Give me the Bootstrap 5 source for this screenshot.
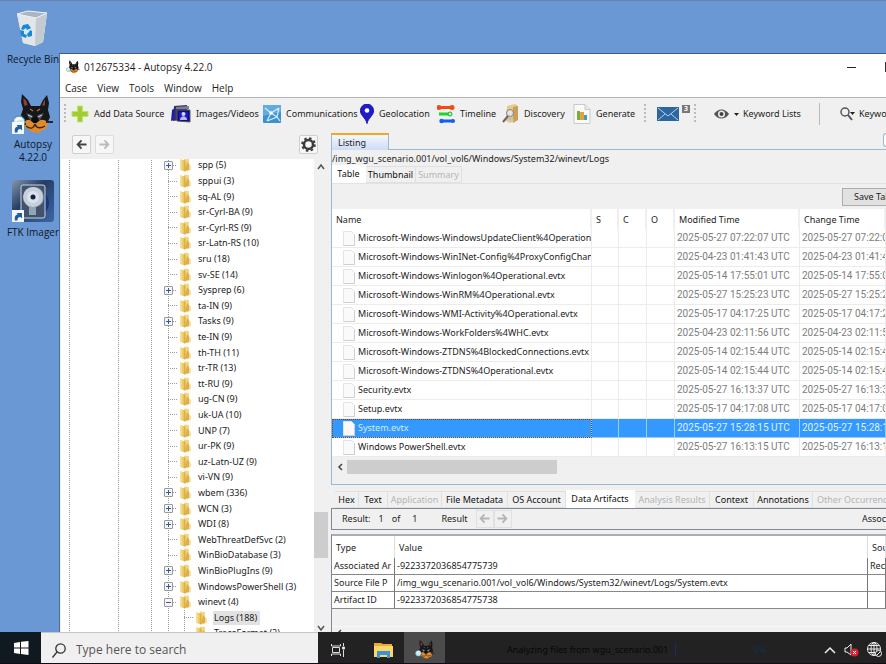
<!DOCTYPE html>
<html lang="en">
<head>
<meta charset="utf-8">
<meta name="viewport" content="width=device-width, initial-scale=1">
<title>012675334 - Autopsy 4.22.0</title>
<link href="https://cdn.jsdelivr.net/npm/bootstrap@5.3.0/dist/css/bootstrap.min.css" rel="stylesheet">
<style>
:root{--ui:"Noto Sans","Open Sans",sans-serif;--shell:"Open Sans","Noto Sans",sans-serif;--face:#f0f0f0;--edge:#9db9d1}
body{font:9px/16px var(--ui);color:#1c1c1c;background:#6998d4;height:100vh;overflow:hidden}
button{font:inherit;color:inherit}
svg{flex:none;display:block}
.clip{overflow:hidden;white-space:nowrap}
.desk{border-top:1px solid #6b82ab;min-height:0}
.shortcuts{width:59px;font:10px/13px var(--shell);color:#0d1726;padding-top:8px}
.shortcuts a{width:66px;color:inherit;text-decoration:none;text-align:center;display:flex;flex-direction:column;align-items:center}
.win{background:var(--face);border-left:1px solid #4f6f9d;border-top:1px solid #3d5c8c;margin-top:52px;min-width:0}
.caption-bar{background:#fff;height:26px;font:10px/24px var(--shell);padding:0 0 0 6px}
.menus{background:#fff;height:18px;border-bottom:1px solid #b4b4b4;font:10px/17px var(--shell);padding-left:5px;gap:10px}
.menus button,.tool,.plain{background:none;border:0;padding:0;white-space:nowrap}
.tools{height:34px;display:grid;align-items:center;grid-template-columns:7px 100px 92px 97px 77px 65px 71px 71px 13px 37px 20px 105px 21px auto;padding:0 0 2px 4px}
.tool{display:flex;align-items:center;gap:5px;text-align:left}
.grip{width:2px;height:20px;background:linear-gradient(#bbb 50%,transparent 50%) 0 0/2px 4px}
.left{width:268px}
.navrow{height:27px;padding:3px 10px 0 12px}
.sq{width:19px;height:19px;padding:0;border:1px solid #cfcfcf;border-radius:2px;background:#f7f7f7;display:flex;align-items:center;justify-content:center;color:#444}
.sq:disabled{border-color:#ddd;color:#bbb}
.treebox{background:#fff;margin-left:1px;min-height:0}
.tree{margin:-1px 0 -9px;padding:0;list-style:none;flex:1;display:flex;flex-direction:column;
--d:linear-gradient(#999 50%,transparent 50%);
background:var(--d) 8px 0/1px 2px repeat-y,var(--d) 57px 0/1px 2px repeat-y,var(--d) 90px 0/1px 2px repeat-y,var(--d) 107px 0/1px 2px repeat-y}
.tree li{flex:1 1 0;min-height:0;display:flex;align-items:center;padding-left:103px;line-height:14px}
.tree li::before{content:"";order:1;width:9px;height:1px;margin-left:4px;background:linear-gradient(90deg,#999 50%,transparent 50%) 0 0/2px 1px}
.tree li.kids::before{width:4px;margin-left:0}
.tree button{order:0;width:9px;height:9px;padding:0;border:1px solid #999;background:#f5f5f5;border-radius:1px;display:flex;align-items:center;justify-content:center}
.tree svg.fold{order:2;margin:0 6px 0 2px}
.tree span{order:3}
.tree li.deep{padding-left:119px;background:linear-gradient(#999 50%,transparent 50%) 123px 0/1px 2px repeat-y}
.tree .on{background:#e2e2e2;padding:0 3px 0 1px;margin-left:-1px}
.vbar{width:14px;background:var(--face)}
.vthumb{background:#cdcdcd;height:46px}
.right{min-width:0;margin-left:3px}
.toptabs{height:18px;padding-top:1px;border-bottom:1px solid var(--edge)}
.toptabs .cur{width:58px;height:17px;line-height:15px;border:1px solid var(--edge);border-top:2px solid #f5a623;border-bottom:0;background:linear-gradient(#f4f7fd,#cddcf6);padding:0 0 0 6px;text-align:left}
.tail{width:3px;height:14px;padding:0;border:1px solid var(--edge);border-right:0;background:#fff;border-radius:3px 0 0 3px}
.listing{border-left:1px solid var(--edge);border-bottom:1px solid var(--edge)}
.path{height:16px;line-height:18px}
.tabs{height:18px;display:flex;align-items:flex-end;border-bottom:1px solid #e2e2e2}
.tabs button{height:17px;line-height:16px;padding:0;border:1px solid #e0e0e0;border-left:0;background:var(--face);text-align:center;flex:none;white-space:nowrap;color:#111;overflow:hidden}
.tabs button:disabled{color:#b4b4b4}
.tabs .cur{height:18px;background:#fff;border-color:#fff}
.actions{height:25px;padding:4px 0}
.save{width:44px;height:18px;line-height:15px;border:1px solid #adadad;border-right:0;background:#e1e1e1;padding:0 0 0 11px;text-align:left}
.grid{table-layout:fixed;width:100%;border-collapse:separate;border-spacing:0;background:#fff}
.grid th,.grid td{overflow:hidden;white-space:nowrap;font-weight:400;vertical-align:middle}
.files th{height:20px;padding:3px 4px 0;border-right:2px solid #efefef;line-height:16px}
.files td{height:19px;line-height:17px;padding:0 2px;border-right:1px solid #ececec;border-bottom:1px solid #ececec;color:#7d7d7d;font-family:Roboto,"Noto Sans",sans-serif;font-size:10px}
.files td:first-child{padding-left:11px;color:#1c1c1c;font-family:var(--ui);font-size:9px}
.files .doc{display:inline-block;vertical-align:middle;margin-right:3px}
.files .sel td{background:#3399ff;color:#e3f0ff;border-color:#9cf}
.files .sel td:first-child{outline:1px dotted #7a4b10;outline-offset:-1px;color:#d5e9ff}
.hbar{height:27px;padding:3px 0 9px 5px}
.hthumb{background:#cdcdcd;width:210px;height:14px}
.lower{padding-top:5px}
.lower .tabs{border:0}
.result{border:1px solid #7f8893;border-right:0;height:22px;padding-left:10px}
.result .plain{width:18px;height:18px;border:1px solid #e0e0e0;display:flex;align-items:center;justify-content:center}
.arts{border-left:1px solid #7f8893;border-top:2px solid #a9adb2;margin-top:4px}
.arts th{height:22px;padding:3px 4px 0;border-right:1px solid #ddd}
.arts td{height:17px;line-height:16px;padding:0 2px;border-right:1px solid #777;border-bottom:1px solid #888}
.bottomgap{border-bottom:1px solid #f8f8f8;height:18px}
.task{height:32px;background:#222;border-bottom:1px solid #120c18}
.start{width:41px;background:#101820;border:0;padding:0;display:flex;align-items:center;justify-content:center}
.find{width:277px;background:#f0f0f0;border-top:1px solid #c6c6c6;padding:4px 11px 0;gap:10px}
.find input{border:0;background:none;outline:0;font:12px/20px var(--shell);padding:0;min-width:0;flex:1}
.find input::placeholder{color:#555;opacity:1}
.app{width:41px;background:none;border:0;padding:4px 0 0;display:flex;align-items:center;justify-content:center}
.app.live{background:#4b4b4b}
.ghost{color:#070707;padding-left:62px}
.ghost b{font-weight:400;color:#142f50;border-left:1px solid #1c2c66;padding-left:78px;margin-left:4px}
.sep{height:22px}
.midrow{min-height:0}
.vrest{height:66px}
.num{font:bold 7px/8px var(--ui);background:#777;color:#fff;width:8px;height:8px;text-align:center;margin-left:3px}
</style>
<script src="https://cdn.jsdelivr.net/npm/bootstrap@5.3.0/dist/js/bootstrap.bundle.min.js"></script>
</head>
<body class="d-flex flex-column">
<svg width="0" height="0" class="position-absolute" aria-hidden="true">
<linearGradient id="gold" x1="0" x2="1"><stop offset="0" stop-color="#f9e79c"/><stop offset="1" stop-color="#e3b64a"/></linearGradient>
<symbol id="fold" viewBox="0 0 13 14"><path d="M5 .5l5 .5v8l-4 3z" fill="#f3d87c"/><path d="M8 4l3.500 4v4L6 13z" fill="#dfae47"/><path d="M10 7l2 1v4h-2z" fill="#f4dfa0"/><path d="M1 1l5 1.500v11L1 12z" fill="url(#gold)"/><path d="M6 2.500v11" stroke="#cfa23e" stroke-width=".8"/></symbol>
<symbol id="doc" viewBox="0 0 12 15"><path d="M.5.5h8l3 3v11H.5z" fill="#fafafa" stroke="#e4e4e4"/><path d="M11.500 3.500v11H.5" fill="none" stroke="#cfcfcf"/></symbol>
<symbol id="plus" viewBox="0 0 7 7"><path d="M1 3.500h5M3.500 1v5" stroke="#3957a0"/></symbol>
<symbol id="minus" viewBox="0 0 7 7"><path d="M1 3.500h5" stroke="#3957a0"/></symbol>
<symbol id="larr" viewBox="0 0 12 12"><path d="M6 1.500L1.800 6 6 10.500M2 6h9.500" fill="none" stroke="currentColor" stroke-width="2"/></symbol>
<symbol id="rarr" viewBox="0 0 12 12"><path d="M6 1.500L10.200 6 6 10.500M10 6H.5" fill="none" stroke="currentColor" stroke-width="2"/></symbol>
<symbol id="dog" viewBox="0 0 42 40"><path d="M11 15L9 8l1-8 6 6 3 6h9l3-6 4-5 2 8-1 7 2 7-4 9-7 4-9-1-6-7-3-7z" fill="#15171b"/><path d="M12.500 12l-1-4v-4l3 3 1 4z" fill="#8e3f33"/><path d="M33 11V5l-2 4-1 3z" fill="#8e3f33"/><path d="M14 19l6 2 2 4-4 1zM32 19l-6 2-2 4 4 1z" fill="#4b535f"/><path d="M18 15l3 2M28 15l-3 2" stroke="#c5702d" stroke-width="1.200"/><path d="M16 21l4 2M30 21l-4 2" stroke="#cfd3d6" stroke-width="1"/><path d="M12 29c3-5 7-3 8-1l3-1 3 1c2-3 7-3 10 1l-2 6-4 1-3 3-7-1-4-3-3-2z" fill="#e08a2c"/><path d="M19 24c2-1 6-1 8 0l-2 5h-4z" fill="#0c0d10"/><path d="M14 32c5 4 8 2 9-2 1 4 5 5 10 2" fill="none" stroke="#3b2110" stroke-width="1.300"/><path d="M8 30l6 0M34 28l7 0" stroke="#24272c" stroke-width="2"/><circle cx="7" cy="28" r="6" fill="#c5eaf4" stroke="#518196"/><path d="M4 27c1-3 4-3 6-2" stroke="#fff" stroke-width="2" fill="none"/></symbol>
<symbol id="jump" viewBox="0 0 12 12"><path d="M0 0h12v12H0z" fill="#f3f6fa"/><path d="M3 10.500c-1-4 1-6 3-6L4.500 3h5.500v5.500L8.500 7C6 7 5.500 8.500 5.500 10.500z" fill="#1d5ca8"/></symbol>
</svg>

<main class="desk d-flex flex-fill">
<nav class="shortcuts flex-shrink-0 clip" aria-label="Desktop">
<a href="#"><svg width="36" height="40" viewBox="0 0 36 40"><path d="M2 5l11-3 19 2-4 29-8 4-12-3z" fill="#d3d9df"/><path d="M2 5l19 4 11-5-4 29-8 4-12-3z" fill="#e2e5e9"/><path d="M21 9l11-5-4 29-8 4z" fill="#c3cad2"/><path d="M2 5l11-3 19 2-11 5z" fill="#a9b5c1" stroke="#eef2f5"/><g fill="#168ad8"><path d="M8 16l5-1 3 4-4 2-1-2-3 2-2-1z"/><path d="M5 21l4 1v3l3 1-1 3-5-2z"/><path d="M13 28l-1-3 2-2 1-2 2 1v5z"/></g></svg><span class="mt-1">Recycle Bin</span></a>
<a href="#" class="mt-4"><span class="position-relative pt-1"><svg width="42" height="40"><use href="#dog"/></svg><svg class="position-absolute bottom-0 start-0" width="12" height="12"><use href="#jump"/></svg></span><span class="pt-1">Autopsy<br>4.22.0</span></a>
<a href="#" class="mt-3"><span class="position-relative"><svg width="42" height="42" viewBox="0 0 42 42"><defs><linearGradient id="fg" x1="0" y1="0" x2="1" y2="1"><stop offset="0" stop-color="#8496ae"/><stop offset=".4" stop-color="#263d63"/><stop offset="1" stop-color="#3c66a7"/></linearGradient></defs><rect width="42" height="42" rx="3" fill="url(#fg)"/><path d="M22 10c20 0 20 26 0 26z" fill="#153a7b"/><rect x="9" y="5" width="24" height="33" rx="2" fill="#43536d" stroke="#ccd5df"/><path d="M12 13c3-8 16-8 19 0 2 9-1 12-7 14v8h-7v-8c-5-4-6-8-5-14z" fill="#93a4b7"/><circle cx="21" cy="17" r="10" fill="#c6d0da"/><circle cx="21" cy="17" r="6" fill="#dbe2e8"/><circle cx="21" cy="17" r="2.500" fill="#112344"/></svg><svg class="position-absolute bottom-0 start-0" width="12" height="12"><use href="#jump"/></svg></span><span class="pt-1">FTK Imager</span></a>
</nav>

<section class="win d-flex flex-column flex-fill clip">
<header class="caption-bar d-flex align-items-center">
<svg width="14" height="14" class="me-1"><use href="#dog"/></svg><span>012675334 - Autopsy 4.22.0</span>
<button class="plain ms-auto" aria-label="Minimize"><svg width="9" height="10"><path d="M0 5.500h9" stroke="#222"/></svg></button>
<button class="plain ps-4" aria-label="Maximize"><svg width="6" height="10"><path d="M5.500 0v10" stroke="#333"/></svg></button>
</header>
<nav class="menus d-flex" aria-label="Menu"><button>Case</button><button>View</button><button>Tools</button><button>Window</button><button>Help</button></nav>

<div class="tools clip">
<i class="grip"></i>
<button class="tool"><svg width="18" height="18" viewBox="0 0 18 18"><path d="M6.500 1h5v5.500H17v5h-5.500V17h-5v-5.500H1v-5h5.500z" fill="#9fce2e" stroke="#c3df79"/></svg>Add Data Source</button>
<button class="tool"><svg width="20" height="20" viewBox="0 0 20 20"><path d="M3 2l13-1 1 14-15 2z" fill="#353566"/><path d="M1 6l3-2-1 12-3 1z" fill="#2020a0"/><path d="M5 3l13-1v3H5z" fill="#7d7d95"/><path d="M6 6h13v12l-13-1z" fill="#10106f" stroke="#555b68"/><path d="M8 8h9v8H8z" fill="#1d16c8"/><circle cx="12.500" cy="10" r="2" fill="#d4d5ff"/><path d="M9 16c0-5 7-5 7 0z" fill="#b8b7ff"/></svg>Images/Videos</button>
<button class="tool"><svg width="18" height="18" viewBox="0 0 18 18"><rect width="18" height="18" rx="1" fill="#3d91cf"/><path d="M0 0h18v7L0 11z" fill="#62abdf"/><path d="M2 3l6 5 8-5M8 8l-4 8M8 8l6 4 3 4M16 3l-2 9-10 4" fill="none" stroke="#d5ecfa" stroke-width="1.200"/><circle cx="8" cy="8" r="1.700" fill="#fff"/></svg>Communications</button>
<button class="tool"><svg width="14" height="20" viewBox="0 0 14 20"><path d="M7 19.500C6 14 0 11 .5 6.500a6.500 6.500 0 0 1 13 0C14 11 8 14 7 19.500z" fill="#1d1dcb" stroke="#1414a0"/><circle cx="7" cy="6.500" r="2.300" fill="#fff"/></svg>Geolocation</button>
<button class="tool"><svg width="18" height="20" viewBox="0 0 18 20"><path d="M1 3.500h15" stroke="#f04b16" stroke-width="3"/><circle cx="2" cy="3.500" r="2.500" fill="#f04b16"/><circle cx="15" cy="3.500" r="2.500" fill="#f04b16"/><path d="M2 10h11" stroke="#1fd42b" stroke-width="3"/><circle cx="13" cy="10" r="2" fill="#bff1c0" stroke="#14b222"/><path d="M4 17h12" stroke="#1261ec" stroke-width="3"/><circle cx="4.500" cy="17" r="2.200" fill="#1261ec"/><circle cx="16" cy="17" r="2" fill="#1261ec"/></svg>Timeline</button>
<button class="tool"><svg width="17" height="20" viewBox="0 0 17 20"><path d="M5 2l8-2 3 2v14l-8 3-4-2z" fill="#e8c98c"/><path d="M11 3l5-1v14l-5 3z" fill="#c99f5b"/><circle cx="8" cy="9" r="3.500" fill="#e6e4df" stroke="#85827b"/><path d="M6 12l-5 6" stroke="#686661" stroke-width="2"/><path d="M5 16c1-5 6-4 7 1" fill="#c7c2b8"/></svg>Discovery</button>
<button class="tool"><svg width="18" height="20" viewBox="0 0 18 20"><path d="M1 .5h11l5 5v14H1z" fill="#fafafa" stroke="#c9c9c9"/><path d="M12 .5v5h5" fill="#e8e8e8" stroke="#c9c9c9"/><path d="M4 7h3v9H4z" fill="#7cab40"/><path d="M7 8h4v8H7z" fill="#e0a33d"/><path d="M11 11h3v5h-3z" fill="#3d9cc8"/></svg>Generate</button>
<i class="grip"></i>
<button class="tool gap-0 align-items-start" aria-label="Messages"><svg width="22" height="17" viewBox="0 0 22 17"><path d="M0 2h22v14H0z" fill="#2c669f"/><path d="M1 3l10 8L21 3M1 15l7-6M21 15l-7-6" fill="none" stroke="#b9d1e6"/></svg><span class="num">3</span></button>
<i class="grip"></i>
<button class="tool gap-1"><svg width="25" height="12" viewBox="0 0 25 12"><path d="M0 6c4-6 11-6 15 0-4 6-11 6-15 0z" fill="#555"/><circle cx="7.500" cy="6" r="3.500" fill="#eee"/><circle cx="7.500" cy="6" r="2" fill="#444"/><path d="M20 5h5l-2.500 3z" fill="#222"/></svg>Keyword Lists</button>
<span class="vr sep align-self-center"></span>
<button class="tool gap-1"><svg width="15" height="14" viewBox="0 0 15 14"><circle cx="5" cy="5" r="4" fill="none" stroke="#555" stroke-width="1.500"/><path d="M8 8l4 5" stroke="#555" stroke-width="2"/><path d="M10 5h5l-2.500 3z" fill="#222"/></svg>Keyword Search</button>
</div>

<div class="midrow d-flex flex-fill">
<aside class="left d-flex flex-column flex-shrink-0">
<div class="navrow d-flex flex-shrink-0"><button class="sq" aria-label="Back"><svg width="11" height="11"><use href="#larr"/></svg></button><button class="sq ms-1" disabled aria-label="Forward"><svg width="11" height="11"><use href="#rarr"/></svg></button>
<button class="sq ms-auto" aria-label="Options"><svg width="15" height="15" viewBox="0 0 15 15"><circle cx="7.500" cy="7.500" r="4.500" fill="none" stroke="#3b3b3b" stroke-width="2.500"/><circle cx="7.500" cy="7.500" r="6.400" fill="none" stroke="#3b3b3b" stroke-width="1.800" stroke-dasharray="2.500 2.500"/></svg></button></div>
<div class="treebox d-flex flex-fill clip">
<ul class="tree">
<li class="kids"><button aria-label="Expand"><svg width="7" height="7"><use href="#plus"/></svg></button><svg class="fold" width="13" height="14"><use href="#fold"/></svg><span>spp (5)</span></li>
<li><svg class="fold" width="13" height="14"><use href="#fold"/></svg><span>sppui (3)</span></li>
<li><svg class="fold" width="13" height="14"><use href="#fold"/></svg><span>sq-AL (9)</span></li>
<li><svg class="fold" width="13" height="14"><use href="#fold"/></svg><span>sr-Cyrl-BA (9)</span></li>
<li><svg class="fold" width="13" height="14"><use href="#fold"/></svg><span>sr-Cyrl-RS (9)</span></li>
<li><svg class="fold" width="13" height="14"><use href="#fold"/></svg><span>sr-Latn-RS (10)</span></li>
<li><svg class="fold" width="13" height="14"><use href="#fold"/></svg><span>sru (18)</span></li>
<li><svg class="fold" width="13" height="14"><use href="#fold"/></svg><span>sv-SE (14)</span></li>
<li class="kids"><button aria-label="Expand"><svg width="7" height="7"><use href="#plus"/></svg></button><svg class="fold" width="13" height="14"><use href="#fold"/></svg><span>Sysprep (6)</span></li>
<li><svg class="fold" width="13" height="14"><use href="#fold"/></svg><span>ta-IN (9)</span></li>
<li class="kids"><button aria-label="Expand"><svg width="7" height="7"><use href="#plus"/></svg></button><svg class="fold" width="13" height="14"><use href="#fold"/></svg><span>Tasks (9)</span></li>
<li><svg class="fold" width="13" height="14"><use href="#fold"/></svg><span>te-IN (9)</span></li>
<li><svg class="fold" width="13" height="14"><use href="#fold"/></svg><span>th-TH (11)</span></li>
<li><svg class="fold" width="13" height="14"><use href="#fold"/></svg><span>tr-TR (13)</span></li>
<li><svg class="fold" width="13" height="14"><use href="#fold"/></svg><span>tt-RU (9)</span></li>
<li><svg class="fold" width="13" height="14"><use href="#fold"/></svg><span>ug-CN (9)</span></li>
<li><svg class="fold" width="13" height="14"><use href="#fold"/></svg><span>uk-UA (10)</span></li>
<li><svg class="fold" width="13" height="14"><use href="#fold"/></svg><span>UNP (7)</span></li>
<li><svg class="fold" width="13" height="14"><use href="#fold"/></svg><span>ur-PK (9)</span></li>
<li><svg class="fold" width="13" height="14"><use href="#fold"/></svg><span>uz-Latn-UZ (9)</span></li>
<li><svg class="fold" width="13" height="14"><use href="#fold"/></svg><span>vi-VN (9)</span></li>
<li class="kids"><button aria-label="Expand"><svg width="7" height="7"><use href="#plus"/></svg></button><svg class="fold" width="13" height="14"><use href="#fold"/></svg><span>wbem (336)</span></li>
<li class="kids"><button aria-label="Expand"><svg width="7" height="7"><use href="#plus"/></svg></button><svg class="fold" width="13" height="14"><use href="#fold"/></svg><span>WCN (3)</span></li>
<li class="kids"><button aria-label="Expand"><svg width="7" height="7"><use href="#plus"/></svg></button><svg class="fold" width="13" height="14"><use href="#fold"/></svg><span>WDI (8)</span></li>
<li><svg class="fold" width="13" height="14"><use href="#fold"/></svg><span>WebThreatDefSvc (2)</span></li>
<li><svg class="fold" width="13" height="14"><use href="#fold"/></svg><span>WinBioDatabase (3)</span></li>
<li class="kids"><button aria-label="Expand"><svg width="7" height="7"><use href="#plus"/></svg></button><svg class="fold" width="13" height="14"><use href="#fold"/></svg><span>WinBioPlugIns (9)</span></li>
<li class="kids"><button aria-label="Expand"><svg width="7" height="7"><use href="#plus"/></svg></button><svg class="fold" width="13" height="14"><use href="#fold"/></svg><span>WindowsPowerShell (3)</span></li>
<li class="kids"><button aria-label="Collapse"><svg width="7" height="7"><use href="#minus"/></svg></button><svg class="fold" width="13" height="14"><use href="#fold"/></svg><span>winevt (4)</span></li>
<li class="deep"><svg class="fold" width="13" height="14"><use href="#fold"/></svg><span class="on">Logs (188)</span></li>
<li class="deep"><svg class="fold" width="13" height="14"><use href="#fold"/></svg><span>TraceFormat (2)</span></li>
</ul>
<div class="vbar d-flex flex-column align-items-center flex-shrink-0">
<svg class="mt-1" width="8" height="8"><path d="M1 6l3-4 3 4" fill="none" stroke="#555" stroke-width="1.500"/></svg>
<div class="flex-fill"></div><div class="vthumb w-100"></div><div class="vrest"></div>
<svg width="8" height="8"><path d="M1 2l3 4 3-4" fill="none" stroke="#555" stroke-width="1.500"/></svg>
</div>
</div>
</aside>

<section class="right flex-fill d-flex flex-column">
<div class="toptabs d-flex"><button class="cur">Listing</button><button class="tail ms-auto" aria-label="Scroll tabs"></button></div>
<div class="listing">
<div class="path clip">/img_wgu_scenario.001/vol_vol6/Windows/System32/winevt/Logs</div>
<div class="tabs"><button class="cur" style="width:34px">Table</button><button style="width:50px">Thumbnail</button><button style="width:46px" disabled>Summary</button></div>
<div class="actions d-flex justify-content-end"><button class="save clip">Save Table as CSV</button></div>
<table class="grid files">
<colgroup><col style="width:260px"><col style="width:27px"><col style="width:28px"><col style="width:28px"><col style="width:125px"><col></colgroup>
<thead><tr><th>Name</th><th>S</th><th>C</th><th>O</th><th>Modified Time</th><th>Change Time</th></tr></thead>
<tbody>
<tr><td><svg class="doc" width="12" height="15"><use href="#doc"/></svg>Microsoft-Windows-WindowsUpdateClient%4Operational.evtx</td><td></td><td></td><td></td><td>2025-05-27 07:22:07 UTC</td><td>2025-05-27 07:22:07 UTC</td></tr>
<tr><td><svg class="doc" width="12" height="15"><use href="#doc"/></svg>Microsoft-Windows-WinINet-Config%4ProxyConfigChanged.evtx</td><td></td><td></td><td></td><td>2025-04-23 01:41:43 UTC</td><td>2025-04-23 01:41:43 UTC</td></tr>
<tr><td><svg class="doc" width="12" height="15"><use href="#doc"/></svg>Microsoft-Windows-Winlogon%4Operational.evtx</td><td></td><td></td><td></td><td>2025-05-14 17:55:01 UTC</td><td>2025-05-14 17:55:01 UTC</td></tr>
<tr><td><svg class="doc" width="12" height="15"><use href="#doc"/></svg>Microsoft-Windows-WinRM%4Operational.evtx</td><td></td><td></td><td></td><td>2025-05-27 15:25:23 UTC</td><td>2025-05-27 15:25:23 UTC</td></tr>
<tr><td><svg class="doc" width="12" height="15"><use href="#doc"/></svg>Microsoft-Windows-WMI-Activity%4Operational.evtx</td><td></td><td></td><td></td><td>2025-05-17 04:17:25 UTC</td><td>2025-05-17 04:17:25 UTC</td></tr>
<tr><td><svg class="doc" width="12" height="15"><use href="#doc"/></svg>Microsoft-Windows-WorkFolders%4WHC.evtx</td><td></td><td></td><td></td><td>2025-04-23 02:11:56 UTC</td><td>2025-04-23 02:11:56 UTC</td></tr>
<tr><td><svg class="doc" width="12" height="15"><use href="#doc"/></svg>Microsoft-Windows-ZTDNS%4BlockedConnections.evtx</td><td></td><td></td><td></td><td>2025-05-14 02:15:44 UTC</td><td>2025-05-14 02:15:44 UTC</td></tr>
<tr><td><svg class="doc" width="12" height="15"><use href="#doc"/></svg>Microsoft-Windows-ZTDNS%4Operational.evtx</td><td></td><td></td><td></td><td>2025-05-14 02:15:44 UTC</td><td>2025-05-14 02:15:44 UTC</td></tr>
<tr><td><svg class="doc" width="12" height="15"><use href="#doc"/></svg>Security.evtx</td><td></td><td></td><td></td><td>2025-05-27 16:13:37 UTC</td><td>2025-05-27 16:13:37 UTC</td></tr>
<tr><td><svg class="doc" width="12" height="15"><use href="#doc"/></svg>Setup.evtx</td><td></td><td></td><td></td><td>2025-05-17 04:17:08 UTC</td><td>2025-05-17 04:17:08 UTC</td></tr>
<tr class="sel"><td><svg class="doc" width="12" height="15"><use href="#doc"/></svg>System.evtx</td><td></td><td></td><td></td><td>2025-05-27 15:28:15 UTC</td><td>2025-05-27 15:28:15 UTC</td></tr>
<tr><td><svg class="doc" width="12" height="15"><use href="#doc"/></svg>Windows PowerShell.evtx</td><td></td><td></td><td></td><td>2025-05-27 16:13:15 UTC</td><td>2025-05-27 16:13:15 UTC</td></tr>
</tbody></table>
<div class="hbar d-flex"><svg width="10" height="14"><path d="M5 4L2 7l3 3" fill="none" stroke="#444" stroke-width="1.500"/></svg><div class="hthumb"></div></div>
</div>

<div class="lower">
<div class="tabs clip ps-1"><button style="width:24px">Hex</button><button style="width:29px">Text</button><button style="width:54px" disabled>Application</button><button style="width:66px">File Metadata</button><button style="width:58px">OS Account</button><button class="cur" style="width:69px">Data Artifacts</button><button style="width:75px" disabled>Analysis Results</button><button style="width:44px">Context</button><button style="width:59px">Annotations</button><button class="text-start ps-1" style="width:90px" disabled>Other Occurrences</button></div>
<div class="result d-flex align-items-center clip"><span>Result:</span><span class="ms-2">1</span><span class="mx-2">of</span><span class="ms-1">1</span><span class="ms-4">Result</span>
<button class="plain ms-2" disabled aria-label="Previous"><svg width="11" height="11" color="#b5b5b5"><use href="#larr"/></svg></button><button class="plain" disabled aria-label="Next"><svg width="11" height="11" color="#b5b5b5"><use href="#rarr"/></svg></button><span class="ms-auto clip" style="width:24px">Associated</span></div>
<div class="arts"><table class="grid"><colgroup><col style="width:63px"><col><col style="width:18px"></colgroup>
<thead><tr><th>Type</th><th>Value</th><th class="ps-1">Source</th></tr></thead>
<tbody><tr><td>Associated Ar</td><td>-9223372036854775739</td><td>Recent</td></tr><tr><td>Source File P</td><td>/img_wgu_scenario.001/vol_vol6/Windows/System32/winevt/Logs/System.evtx</td><td></td></tr><tr><td>Artifact ID</td><td>-9223372036854775738</td><td></td></tr></tbody></table>
<div class="bottomgap"></div><svg width="14" height="8"><path d="M9 3L6 6l3 3" fill="none" stroke="#444" stroke-width="1.500"/></svg></div>
</div>
</section>
</div>
</section>
</main>

<footer class="task d-flex flex-shrink-0 clip">
<button class="start" aria-label="Start"><svg width="16" height="16" viewBox="0 0 16 16" fill="#fff"><path d="M1 3l6-1v5.500H1zM8 1.800L15.500 1v6.500H8zM1 8.500h6V14l-6-1zM8 8.500h7.500V15L8 14z"/></svg></button>
<label class="find d-flex align-items-center flex-shrink-0"><svg width="14" height="15" viewBox="0 0 14 15" aria-label="Search"><circle cx="8.500" cy="5.500" r="4.700" fill="none" stroke="#333" stroke-width="1.300"/><path d="M5 9l-4.500 5.500" stroke="#333" stroke-width="1.300"/></svg><input type="text" placeholder="Type here to search"></label>
<button class="app" aria-label="Task View"><svg width="15" height="14" viewBox="0 0 15 14" fill="none" stroke="#ddd"><path d="M.5 1v2h9V1M.5 13v-2h9v2M1.500 4.500h7v5h-7zM12.500 0v3M12.500 7v7"/><path d="M11.500 4h2v2h-2z" fill="#fff"/></svg></button>
<button class="app ms-1" aria-label="File Explorer"><svg width="19" height="16" viewBox="0 0 19 16"><path d="M0 1h7l2 1h9v13H0z" fill="#e8ac32"/><path d="M0 4h19v11H0z" fill="#fcd667"/><path d="M3 9h13v7h-3v-3H6v3H3z" fill="#3a93d8"/></svg></button>
<button class="app live" aria-label="Autopsy"><svg width="20" height="19"><use href="#dog"/></svg></button>
<div class="ghost flex-fill align-self-center pt-1">Analyzing files from wgu_scenario.001 <b>0%</b></div>
<div class="d-flex align-items-center gap-2 pe-1 pt-1" aria-label="System tray">
<svg width="12" height="8"><path d="M1 7l5-5 5 5" fill="none" stroke="#eee" stroke-width="1.500"/></svg>
<svg width="15" height="14" viewBox="0 0 15 14"><path d="M1 5h2l4-4v11L3 9H1z" fill="none" stroke="#eee"/><circle cx="10.500" cy="9.500" r="4" fill="#dc1f32"/><path d="M9 8l3 3M12 8l-3 3" stroke="#fff"/></svg>
<svg width="15" height="15" viewBox="0 0 15 15" fill="none" stroke="#eee"><circle cx="7" cy="7" r="6.500"/><path d="M.5 7h13M7 .5v13M2 3.500h10M2 10.500h10"/><ellipse cx="7" cy="7" rx="3" ry="6.500"/><circle cx="11.500" cy="11.500" r="3" fill="#222"/><path d="M9.500 13.500l4-4"/></svg>
</div>
</footer>
</body>
</html>
